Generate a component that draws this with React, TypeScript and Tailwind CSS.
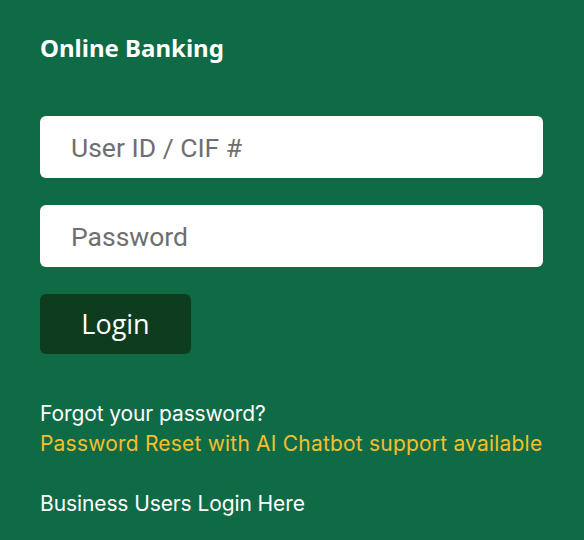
import React from "react";

export default function App() {
  return (
    <div className="w-[584px] h-[540px] bg-[#0f6a46] px-10 pt-[33px] box-border">
      <h2 className="text-[24px] leading-[30px] font-bold text-white [font-family:'Noto_Sans',sans-serif]">
        Online Banking
      </h2>
      <div className="mt-[53px] flex flex-col gap-[27px]">
        <input
          className="h-[62px] w-[503px] rounded-[6px] bg-white px-[31px] text-[26.5px] text-[#333] placeholder:text-[#6f6f6f] outline-none [font-family:Roboto,sans-serif]"
          placeholder="User ID / CIF #"
        />
        <input
          type="password"
          className="h-[62px] w-[503px] rounded-[6px] bg-white px-[31px] text-[26.5px] text-[#333] placeholder:text-[#6f6f6f] outline-none [font-family:Roboto,sans-serif]"
          placeholder="Password"
        />
      </div>
      <button className="mt-[27px] h-[60px] w-[151px] rounded-[6px] bg-[#0e3c1e] text-white text-[27px] leading-[36px] [font-family:'Open_Sans',sans-serif]">
        Login
      </button>
      <div className="mt-[45px] flex flex-col text-[21px] leading-[30px] [font-family:Inter,sans-serif]">
        <a className="text-white tracking-[-0.1px]">Forgot your password?</a>
        <a className="text-[#f4c02c] tracking-[0.2px]">Password Reset with AI Chatbot support available</a>
        <a className="mt-[30px] text-white tracking-[-0.1px]">Business Users Login Here</a>
      </div>
    </div>
  );
}
